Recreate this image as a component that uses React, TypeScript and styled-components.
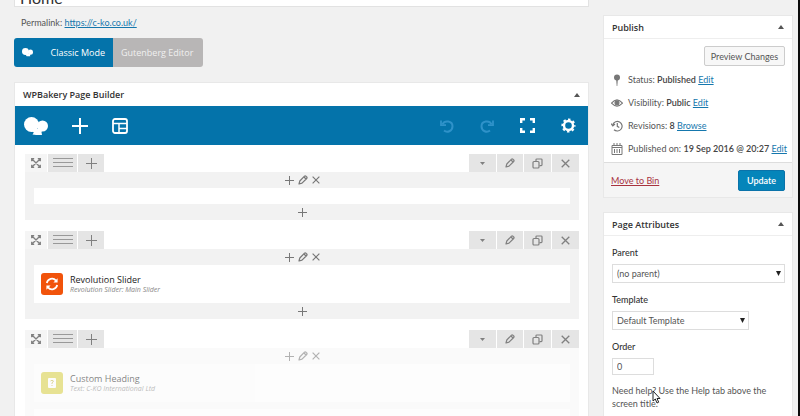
import React from "react";
import styled, { createGlobalStyle, css } from "styled-components";

const Global = createGlobalStyle`
  *, *::before, *::after { box-sizing: border-box; }
  body {
    margin: 0;
    overflow: hidden;
    background: #f1f1f1;
    color: #555;
    font: 9px/13px Lato, "Open Sans", sans-serif;
  }
  button, input, select { font: inherit; color: inherit; margin: 0; }
  button { border: 0; padding: 0; background: none; cursor: pointer; }
  svg { display: block; flex: none; }
`;

const Page = styled.div`
  display: grid;
  grid-template-columns: minmax(0, 1fr) 190px;
  gap: 14px;
  height: 100vh;
  overflow: hidden;
  padding: 0 5px 0 14px;
  border-right: 2px solid #0b0b0b;
`;
const Main = styled.main`
  min-width: 0;
`;
const Side = styled.aside`
  display: flex;
  flex-direction: column;
  gap: 14px;
  padding-top: 15px;
`;

const TitleClip = styled.div`
  display: flex;
  align-items: flex-end;
  height: 7px;
  overflow: hidden;
`;
const TitleInput = styled.input`
  width: 100%;
  height: 20px;
  flex: none;
  padding: 0 5px;
  border: 1px solid #e2e2e2;
  background: #fff;
  color: #333;
  font-size: 16px;
  line-height: 18px;
`;
const Permalink = styled.p`
  margin: 9px 0 9px 7px;
  color: #555;
`;
const Link = styled.a<{ $danger?: boolean }>`
  color: ${(p) => (p.$danger ? "#a8323e" : "#1577ad")};
`;
const Modes = styled.div`
  display: inline-flex;
  height: 29px;
  border-radius: 3px;
  overflow: hidden;
  vertical-align: top;
`;
const ModeButton = styled.button<{ $active?: boolean }>`
  display: flex;
  align-items: center;
  justify-content: space-between;
  width: ${(p) => (p.$active ? 99 : 90)}px;
  padding: 0 8px;
  background: ${(p) => (p.$active ? "#0473aa" : "#b8b6b6")};
  color: ${(p) => (p.$active ? "#fff" : "#f0f0f0")};
  font-family: "Open Sans", sans-serif;
  white-space: nowrap;
`;

const Box = styled.section<{ $fill?: boolean }>`
  background: #fff;
  border: 1px solid #e8e8e8;
  ${(p) => p.$fill && css`min-height: 400px;`}
`;
const BuilderBox = styled(Box)`
  margin-top: 15px;
`;
const BoxHeader = styled.header<{ $line?: boolean }>`
  display: flex;
  align-items: center;
  justify-content: space-between;
  height: 23px;
  padding: 0 8px;
  border-bottom: ${(p) => (p.$line ? "1px solid #eee" : "0")};
`;
const BoxTitle = styled.h2`
  margin: 0;
  color: #333;
  font: 600 9px/13px "Open Sans", sans-serif;
`;

const Toolbar = styled.div`
  display: flex;
  align-items: center;
  justify-content: space-between;
  height: 39px;
  padding: 0 12px 0 9px;
  background: #0473aa;
  color: #fff;
`;
const ToolGroup = styled.div<{ $gap: number }>`
  display: flex;
  align-items: center;
  gap: ${(p) => p.$gap}px;
`;
const ToolButton = styled.button`
  color: #fff;
  &:disabled { color: #2f92c9; }
`;

const Rows = styled.div`
  display: flex;
  flex-direction: column;
  gap: 11px;
  padding: 9px 9px 0 10px;
`;
const RowControls = styled.div`
  display: flex;
  justify-content: space-between;
  height: 18px;
`;
const ControlGroup = styled.div`
  display: flex;
  gap: 1px;
`;
const Control = styled.button<{ $w: number; $light?: boolean }>`
  display: flex;
  align-items: center;
  justify-content: center;
  width: ${(p) => p.$w}px;
  background: ${(p) => (p.$light ? "#f5f5f5" : "#e5e5e5")};
  color: #808080;
`;
const RowBody = styled.div<{ $faded?: boolean }>`
  display: flex;
  flex-direction: column;
  padding: 0 9px;
  background: ${(p) => (p.$faded ? "#fafafa" : "#f2f2f2")};
  & > * { opacity: ${(p) => (p.$faded ? 0.55 : 1)}; }
`;
const ColumnControls = styled.div`
  display: flex;
  align-items: center;
  justify-content: center;
  gap: 4px;
  height: 16px;
  color: #777;
`;
const Element = styled.div`
  display: flex;
  align-items: center;
  gap: 7px;
  min-height: 16px;
  background: #fff;
  & + & { margin-top: 7px; }
`;
const FilledElement = styled(Element)`
  min-height: 38px;
  padding: 0 7px;
`;
const ElementIcon = styled.span<{ $color: string }>`
  display: flex;
  align-items: center;
  justify-content: center;
  width: 22px;
  height: 22px;
  border-radius: 3px;
  background: ${(p) => p.$color};
  color: #fff;
`;
const ElementName = styled.h4`
  margin: 0;
  font: 500 9px/11px "Open Sans", sans-serif;
  color: #222;
`;
const ElementInfo = styled.p`
  margin: 0;
  font: italic 7px/10px "Open Sans", sans-serif;
  color: #888;
`;

const PublishBody = styled.div`
  display: flex;
  flex-direction: column;
  padding: 7px 7px 2px;
`;
const PreviewButton = styled.button`
  align-self: flex-end;
  width: 81px;
  height: 20px;
  margin-bottom: 2px;
  border: 1px solid #ccc;
  border-radius: 2px;
  background: #f7f7f7;
  white-space: nowrap;
`;
const InfoLine = styled.div`
  display: flex;
  align-items: center;
  gap: 5px;
  height: 23px;
  white-space: nowrap;
  & b { font-weight: 600; color: #444; }
`;
const PublishFooter = styled.footer`
  display: flex;
  align-items: center;
  justify-content: space-between;
  height: 35px;
  padding: 0 7px;
  border-top: 1px solid #ddd;
  background: #f5f5f5;
`;
const UpdateButton = styled.button`
  width: 47px;
  height: 21px;
  border: 1px solid #0a73aa;
  border-radius: 2px;
  background: #0585ba;
  color: #fff;
  font-weight: 600;
`;

const Form = styled.form`
  display: flex;
  flex-direction: column;
  align-items: flex-start;
  padding: 10px 7px 0 8px;
`;
const Label = styled.label`
  margin-bottom: 5px;
  font-weight: 500;
  color: #333;
`;
const SelectWrap = styled.div<{ $wide?: boolean }>`
  position: relative;
  width: ${(p) => (p.$wide ? "100%" : "137px")};
  margin-bottom: 10px;
  & > svg { position: absolute; right: 4px; top: 7px; pointer-events: none; }
`;
const Select = styled.select`
  display: block;
  appearance: none;
  width: 100%;
  height: 19px;
  padding: 0 4px;
  border: 1px solid #ddd;
  border-radius: 0;
  background: #fff;
`;
const OrderInput = styled.input`
  width: 42px;
  height: 17px;
  padding: 0 4px;
  border: 1px solid #ddd;
`;
const Help = styled.p`
  position: relative;
  margin: 9px 0 0;
`;
const Cursor = styled.svg`
  position: absolute;
  left: 40px;
  top: 6px;
`;

const Cloud = ({ width }: { width: number }) => (
  <svg width={width} height={(width * 3) / 4} viewBox="0 0 24 18" fill="currentColor">
    <circle cx="7.500" cy="7.500" r="7.500" />
    <circle cx="18.500" cy="9" r="5.500" />
    <path d="M5 12h14l-1.500 3 .5 3c-3 .3-6 .2-9.500-.6l1.300-2z" />
  </svg>
);
const Plus = ({ size, weight = 1.5 }: { size: number; weight?: number }) => (
  <svg width={size} height={size} viewBox={`0 0 ${size} ${size}`} stroke="currentColor" strokeWidth={weight}>
    <path d={`M${size / 2} 0v${size}M0 ${size / 2}h${size}`} />
  </svg>
);
const Layout = () => (
  <svg width="16" height="16" viewBox="0 0 16 16" fill="none" stroke="currentColor" strokeWidth="1.800">
    <rect x="1" y="1" width="14" height="14" rx="2" />
    <path d="M1 5.500h14M7 5.500V15M7 10.500h8" strokeWidth="1.500" />
  </svg>
);
const Undo = ({ flip }: { flip?: boolean }) => (
  <svg width="14" height="14" viewBox="0 0 14 14" fill="none" stroke="currentColor" strokeWidth="2">
    <g transform={flip ? "matrix(-1 0 0 1 14 0)" : undefined}>
      <path d="M2.500 5.200C4.500 1 12.500 1.500 12.500 7.300c0 5-5.500 6.700-8.500 4.200" />
      <path d="M1 1.500v4.700h5" strokeWidth="1.800" />
    </g>
  </svg>
);
const Fullscreen = () => (
  <svg width="15" height="15" viewBox="0 0 15 15" fill="none" stroke="currentColor" strokeWidth="2.400">
    <path d="M1.200 5V1.200H5M10 1.200h3.800V5M13.800 10v3.800H10M5 13.800H1.200V10" />
  </svg>
);
const Gear = () => (
  <svg width="15" height="15" viewBox="0 0 15 15" fill="none" stroke="currentColor">
    <circle cx="7.500" cy="7.500" r="4.500" strokeWidth="2.400" />
    <circle cx="7.500" cy="7.500" r="6.200" strokeWidth="1.800" strokeDasharray="2.500 2.370" strokeDashoffset="1.250" />
  </svg>
);
const Move = () => (
  <svg width="10" height="10" viewBox="0 0 10 10" fill="none" stroke="currentColor" strokeWidth="1.300">
    <path d="M1 1l8 8M9 1L1 9M.7 3.200V.7h2.500M6.800.7h2.500v2.500M9.300 6.800v2.500H6.800M3.200 9.300H.7V6.800" />
  </svg>
);
const Lines = () => (
  <svg width="20" height="10" viewBox="0 0 20 10" stroke="#999" strokeWidth="1">
    <path d="M0 .5h20M0 4.500h20M0 8.500h20" />
  </svg>
);
const Pencil = () => (
  <svg width="10" height="10" viewBox="0 0 10 10" fill="none" stroke="currentColor" strokeWidth="1.200" strokeLinejoin="round">
    <path d="M1 9l.8-3L6.500 1.200Q7.200.6 8 1.300l.700.7q.7.8 0 1.500L4 8.200zM6 2l2 2" />
  </svg>
);
const Copy = () => (
  <svg width="11" height="11" viewBox="0 0 11 11" fill="none" stroke="currentColor" strokeWidth="1.200" strokeLinejoin="round">
    <rect x="1" y="3.500" width="6" height="6.500" rx="1" />
    <path d="M4 3V1.800q0-.8.8-.8H9.200q.8 0 .8.800v5q0 .8-.8.800H7.500" />
  </svg>
);
const Cross = ({ size }: { size: number }) => (
  <svg width={size} height={size} viewBox="0 0 9 9" stroke="currentColor" strokeWidth="1.300">
    <path d="M.7.700l7.600 7.600M8.300.700L.7 8.300" />
  </svg>
);
const Caret = () => (
  <svg width="5" height="3" viewBox="0 0 5 3" fill="currentColor"><path d="M0 0h5L2.500 3z" /></svg>
);
const Up = () => (
  <svg width="6" height="4" viewBox="0 0 6 4" fill="#555"><path d="M0 4h6L3 0z" /></svg>
);
const SelectArrow = () => (
  <svg width="5" height="5" viewBox="0 0 5 5" fill="#222"><path d="M0 0h5L2.500 5z" /></svg>
);
const Refresh = () => (
  <svg width="14" height="14" viewBox="0 0 14 14" fill="none" stroke="currentColor" strokeWidth="1.700">
    <path d="M1.800 6A5.300 5.300 0 0 1 11 3.600M12.200 8A5.300 5.300 0 0 1 3 10.400" />
    <path d="M12.600 1.300v4.200H8.400zM1.400 12.700V8.500h4.200z" fill="currentColor" stroke="none" />
  </svg>
);
const Heading = () => (
  <svg width="10" height="12" viewBox="0 0 10 12">
    <rect x="1" y="1" width="8" height="10" rx="1" fill="#fff" />
    <path d="M3.500 4q1.500-1.500 3 0L5 6v1M5 8v1" fill="none" stroke="#c5b94c" />
  </svg>
);
const Pin = () => (
  <svg width="12" height="12" viewBox="0 0 12 12" fill="#777">
    <circle cx="6" cy="3.500" r="3" /><path d="M5.200 6h1.600L6.300 12h-.6z" />
  </svg>
);
const Eye = () => (
  <svg width="12" height="12" viewBox="0 0 12 12" fill="none" stroke="#777" strokeWidth="1.100">
    <path d="M.5 6.200Q6-.5 11.500 6.200 6 12 .5 6.200z" /><circle cx="6" cy="5.800" r="2" fill="#777" />
  </svg>
);
const History = () => (
  <svg width="12" height="12" viewBox="0 0 12 12" fill="none" stroke="#777" strokeWidth="1.200">
    <path d="M1.800 4.500A4.800 4.800 0 1 1 3 9.700M0 3.500l1.800 2.300L4 4M6.300 3v3.300l2 1.200" />
  </svg>
);
const Calendar = () => (
  <svg width="12" height="12" viewBox="0 0 12 12" fill="none" stroke="#777">
    <path d="M1 2.500h10v9H1zM1 4.500h10M3 0v3M6 0v3M9 0v3M3.500 6v4M6 6v4M8.500 6v4" />
  </svg>
);

const PanelHeader = ({ title, line }: { title: string; line?: boolean }) => (
  <BoxHeader $line={line}>
    <BoxTitle>{title}</BoxTitle>
    <button type="button" aria-label={`Toggle ${title}`}><Up /></button>
  </BoxHeader>
);

const BuilderRow = ({ faded, children }: { faded?: boolean; children: React.ReactNode }) => (
  <div>
    <RowControls>
      <ControlGroup>
        <Control $w={22} $light aria-label="Move row"><Move /></Control>
        <Control $w={29} aria-label="Row layout"><Lines /></Control>
        <Control $w={26} aria-label="Add column"><Plus size={11} weight={1} /></Control>
      </ControlGroup>
      <ControlGroup>
        <Control $w={27} aria-label="Toggle row"><Caret /></Control>
        <Control $w={26} aria-label="Edit row"><Pencil /></Control>
        <Control $w={27} aria-label="Clone row"><Copy /></Control>
        <Control $w={27} aria-label="Delete row"><Cross size={9} /></Control>
      </ControlGroup>
    </RowControls>
    <RowBody $faded={faded}>
      <ColumnControls>
        <button aria-label="Prepend to column"><Plus size={9} weight={1} /></button>
        <button aria-label="Edit column"><Pencil /></button>
        <button aria-label="Delete column"><Cross size={8} /></button>
      </ColumnControls>
      {children}
      <ColumnControls>
        <button aria-label="Append to column"><Plus size={9} weight={1} /></button>
      </ColumnControls>
    </RowBody>
  </div>
);

export default function App() {
  return (
    <>
      <Global />
      <Page>
        <Main>
          <TitleClip><TitleInput aria-label="Title" defaultValue="Home" /></TitleClip>
          <Permalink>Permalink: <Link href="#permalink">https://c-ko.co.uk/</Link></Permalink>
          <Modes>
            <ModeButton $active><Cloud width={11} />Classic Mode</ModeButton>
            <ModeButton>Gutenberg Editor</ModeButton>
          </Modes>
          <BuilderBox $fill>
            <PanelHeader title="WPBakery Page Builder" />
            <Toolbar>
              <ToolGroup $gap={24}>
                <ToolButton aria-label="WPBakery"><Cloud width={24} /></ToolButton>
                <ToolButton aria-label="Add element"><Plus size={16} weight={2} /></ToolButton>
                <ToolButton aria-label="Templates"><Layout /></ToolButton>
              </ToolGroup>
              <ToolGroup $gap={26}>
                <ToolButton disabled aria-label="Undo"><Undo /></ToolButton>
                <ToolButton disabled aria-label="Redo"><Undo flip /></ToolButton>
                <ToolButton aria-label="Fullscreen"><Fullscreen /></ToolButton>
                <ToolButton aria-label="Settings"><Gear /></ToolButton>
              </ToolGroup>
            </Toolbar>
            <Rows>
              <BuilderRow><Element /></BuilderRow>
              <BuilderRow>
                <FilledElement>
                  <ElementIcon $color="#f1530b"><Refresh /></ElementIcon>
                  <div>
                    <ElementName>Revolution Slider</ElementName>
                    <ElementInfo>Revolution Slider: Main Slider</ElementInfo>
                  </div>
                </FilledElement>
              </BuilderRow>
              <BuilderRow faded>
                <FilledElement>
                  <ElementIcon $color="#d8cf3f"><Heading /></ElementIcon>
                  <div>
                    <ElementName>Custom Heading</ElementName>
                    <ElementInfo>Text: C-KO International Ltd</ElementInfo>
                  </div>
                </FilledElement>
                <Element />
              </BuilderRow>
            </Rows>
          </BuilderBox>
        </Main>
        <Side>
          <Box>
            <PanelHeader title="Publish" line />
            <PublishBody>
              <PreviewButton>Preview Changes</PreviewButton>
              <InfoLine><Pin /><span>Status: <b>Published</b> <Link href="#status">Edit</Link></span></InfoLine>
              <InfoLine><Eye /><span>Visibility: <b>Public</b> <Link href="#visibility">Edit</Link></span></InfoLine>
              <InfoLine><History /><span>Revisions: <b>8</b> <Link href="#revisions">Browse</Link></span></InfoLine>
              <InfoLine><Calendar /><span>Published on: <b>19 Sep 2016 @ 20:27</b> <Link href="#date">Edit</Link></span></InfoLine>
            </PublishBody>
            <PublishFooter>
              <Link $danger href="#bin">Move to Bin</Link>
              <UpdateButton>Update</UpdateButton>
            </PublishFooter>
          </Box>
          <Box $fill>
            <PanelHeader title="Page Attributes" line />
            <Form>
              <Label htmlFor="parent">Parent</Label>
              <SelectWrap $wide>
                <Select id="parent"><option>(no parent)</option></Select>
                <SelectArrow />
              </SelectWrap>
              <Label htmlFor="template">Template</Label>
              <SelectWrap>
                <Select id="template"><option>Default Template</option></Select>
                <SelectArrow />
              </SelectWrap>
              <Label htmlFor="order">Order</Label>
              <OrderInput id="order" defaultValue="0" />
              <Help>
                Need help? Use the Help tab above the screen title.
                <Cursor width="9" height="14" viewBox="0 0 9 14" fill="#fff" stroke="#222">
                  <path d="M1 1v10l2.300-2 1.700 4 1.700-.8L5 8.500h3z" />
                </Cursor>
              </Help>
            </Form>
          </Box>
        </Side>
      </Page>
    </>
  );
}
